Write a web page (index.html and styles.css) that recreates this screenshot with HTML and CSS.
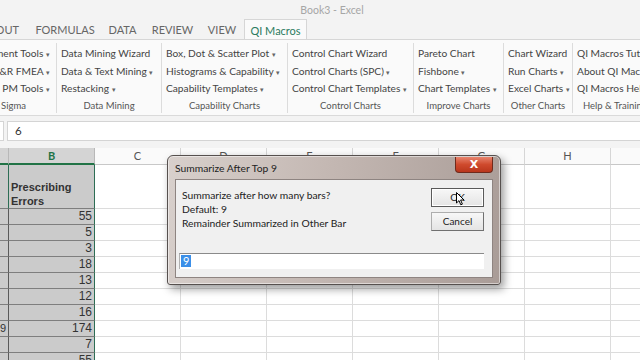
FILE: index.html
```html
<!DOCTYPE html>
<html lang="en">
<head>
  <meta charset="UTF-8" />
  <meta name="viewport" content="width=device-width, initial-scale=1.0"/>
  <title>Book3 - Excel</title>
  <link rel="stylesheet" href="styles.css">
</head>
<body>

  <div class="titlebar">Book3 - Excel</div>

  <div class="tabs">
    <div class="tab t-layout"><span>PAGE LAYOUT</span></div>
    <div class="tab t-formulas">FORMULAS</div>
    <div class="tab t-data">DATA</div>
    <div class="tab t-review">REVIEW</div>
    <div class="tab t-view">VIEW</div>
    <div class="tab t-qi on">QI Macros</div>
  </div>

  <!-- Ribbon groups -->
  <div class="ribbon">
    <div class="group g1">
      <div class="item"><span>Improvement Tools <i>▾</i></span></div>
      <div class="item"><span>Gage R&amp;R FMEA <i>▾</i></span></div>
      <div class="item"><span>Lean PM Tools <i>▾</i></span></div>
      <div class="glabel"><span>Lean Six Sigma</span></div>
    </div>
    <div class="group g2">
      <div class="item">Data Mining Wizard</div>
      <div class="item">Data &amp; Text Mining <i>▾</i></div>
      <div class="item">Restacking <i>▾</i></div>
      <div class="glabel">Data Mining</div>
    </div>
    <div class="group g3">
      <div class="item">Box, Dot &amp; Scatter Plot <i>▾</i></div>
      <div class="item">Histograms &amp; Capability <i>▾</i></div>
      <div class="item">Capability Templates <i>▾</i></div>
      <div class="glabel">Capability Charts</div>
    </div>
    <div class="group g4">
      <div class="item">Control Chart Wizard</div>
      <div class="item">Control Charts (SPC) <i>▾</i></div>
      <div class="item">Control Chart Templates <i>▾</i></div>
      <div class="glabel">Control Charts</div>
    </div>
    <div class="group g5">
      <div class="item">Pareto Chart</div>
      <div class="item">Fishbone <i>▾</i></div>
      <div class="item">Chart Templates <i>▾</i></div>
      <div class="glabel">Improve Charts</div>
    </div>
    <div class="group g6">
      <div class="item">Chart Wizard</div>
      <div class="item">Run Charts <i>▾</i></div>
      <div class="item">Excel Charts <i>▾</i></div>
      <div class="glabel">Other Charts</div>
    </div>
    <div class="group g7">
      <div class="item">QI Macros Tutorial</div>
      <div class="item">About QI Macros</div>
      <div class="item">QI Macros Help</div>
      <div class="glabel">Help &amp; Training</div>
    </div>
  </div>

  <div class="fbar">
    <div class="namebox"></div>
    <div class="formula">6</div>
  </div>

  <div class="sheet" id="sheet"></div>

  <!-- Summarize dialog -->
  <div class="dlg">
    <div class="dlg-title">
      <span>Summarize After Top 9</span>
      <div class="close">X</div>
    </div>
    <div class="dlg-body">
      <div class="dlg-top">
        <div class="msg">
          Summarize after how many bars?<br/>
          Default: 9<br/>
          Remainder Summarized in Other Bar
        </div>
        <div class="btns">
          <div class="btn focus">OK
            <svg class="cursor" width="9" height="14" viewBox="0 0 9 14">
              <path d="M0.5 0.5 L0.5 11 L3 8.6 L4.8 12.8 L6.4 12.1 L4.6 8 L8 8 Z" fill="#fff" stroke="#000" stroke-width="1"/>
            </svg>
          </div>
          <div class="btn">Cancel</div>
        </div>
      </div>
      <div class="dlg-input"><span class="hl">9</span></div>
    </div>
  </div>

  <script>
    const cols = ['A', 'B', 'C', 'D', 'E', 'F', 'G', 'H', 'I'];
    const values = ['55', '5', '3', '18', '13', '12', '16', '174', '7', '55'];
    const sheet = document.getElementById('sheet');

    function cell(cls, html) {
      const d = document.createElement('div');
      d.className = cls;
      d.innerHTML = html || '';
      sheet.appendChild(d);
    }

    // column headings
    cols.forEach((c) => {
      cell(c === 'A' || c === 'B' ? 'hd sel' : 'hd', c === 'A' ? '' : c);
    });

    // header row
    cell('c sel');
    cell('c sel title', 'Prescribing<br>Errors');
    for (let i = 2; i < cols.length; i++) cell('c');

    // data rows
    values.forEach((v, r) => {
      cell('c sel a', r === 7 ? '9' : '');
      cell('c sel num', v);
      for (let i = 2; i < cols.length; i++) cell('c');
    });
  </script>
</body>
</html>
```

FILE: styles.css
```css
* {
  box-sizing: border-box;
}
body {
  margin: 0;
  width: 640px;
  height: 360px;
  overflow: hidden;
  position: relative;
  background: #fff;
  font-family: Lato, "Noto Sans", sans-serif;
  color: #444;
}
i {
  font-style: normal;
  font-size: 7px;
  color: #666;
}

/* title + tabs */
.titlebar {
  height: 19px;
  background: #f3f3f3;
  color: #a6a6a6;
  font-size: 10.5px;
  line-height: 20px;
  text-align: center;
  padding-left: 24px;
}
.tabs {
  height: 21px;
  display: flex;
  background: #f3f3f3;
  border-bottom: 1px solid #d6d6d6;
  font-size: 11px;
  color: #666;
  overflow: hidden;
}
.tab {
  display: flex;
  align-items: center;
  justify-content: center;
  white-space: nowrap;
  flex-shrink: 0;
}
.t-layout {
  width: 30px;
  justify-content: flex-end;
  padding-right: 11px;
}
.t-formulas { width: 70px; }
.t-data { width: 45px; }
.t-review { width: 55px; }
.t-view { width: 44px; }
.t-qi { width: 63px; }
.tab.on {
  background: #fafafa;
  border: 1px solid #d6d6d6;
  border-bottom: none;
  height: 22px;
  color: #2b7a60;
}

/* ribbon */
.ribbon {
  height: 76px;
  display: flex;
  background: #fafafa;
  border-bottom: 1px solid #dadada;
  font-size: 10.2px;
  color: #444;
  overflow: hidden;
}
.group {
  display: flex;
  flex-direction: column;
  padding: 2px 0 0 4px;
  margin: 3px 0 2px;
  border-right: 1px solid #dcdcdc;
  white-space: nowrap;
  flex-shrink: 0;
}
.item {
  height: 17.5px;
  line-height: 17.5px;
}
.glabel {
  margin-top: auto;
  font-size: 9.5px;
  line-height: 14px;
  text-align: center;
  color: #555;
  padding-right: 4px;
}
.g1 { width: 57px; padding-left: 0; padding-right: 6px; }
.g1 .item, .g1 .glabel {
  display: flex;
  justify-content: flex-end;
}
.g1 .glabel { padding-right: 24px; }
.g2 { width: 105px; }
.g3 { width: 126px; }
.g4 { width: 126px; }
.g5 { width: 90px; }
.g6 { width: 69px; }
.g7 { width: 67px; border-right: none; overflow: hidden; }
.g7 .glabel { text-align: left; padding-left: 6px; }

/* formula bar */
.fbar {
  height: 32px;
  display: flex;
  gap: 3px;
  padding: 5px 0 7px;
  background: #f3f3f3;
}
.namebox {
  width: 4px;
  background: #fff;
  border: 1px solid #d4d4d4;
  border-left: none;
}
.formula {
  flex: 1;
  background: #fff;
  border: 1px solid #d4d4d4;
  border-right: none;
  font-size: 11.5px;
  line-height: 18px;
  padding-left: 7px;
  color: #333;
}

/* sheet grid */
.sheet {
  display: grid;
  grid-template-columns: 9px repeat(8, 86px);
  grid-template-rows: 17px 44px;
  grid-auto-rows: 16px;
  overflow: hidden;
  font-family: "Liberation Sans", Arial, sans-serif;
  font-size: 11px;
  color: #333;
}
.hd {
  background: #fafafa;
  border-right: 1px solid #d6d6d6;
  border-bottom: 1px solid #c8c8c8;
  text-align: center;
  line-height: 16px;
  font-family: Lato, sans-serif;
  font-size: 11px;
  color: #555;
}
.hd.sel {
  background: #d4d4d4;
  color: #217346;
  font-weight: bold;
  border-bottom: 2px solid #217346;
  border-right-color: #b8b8b8;
}
.c {
  border-right: 1px solid #dcdcdc;
  border-bottom: 1px solid #dcdcdc;
  overflow: hidden;
  white-space: nowrap;
}
.c.sel {
  background: #cbcbcb;
  border-right-color: #2d6e55;
  border-bottom-color: #7e7e7e;
}
.c.sel.a {
  border-right-color: #5a5a5a;
  text-align: right;
  line-height: 15px;
  padding-right: 7px;
  overflow: visible;
}
.title {
  font-weight: bold;
  line-height: 14px;
  padding: 15px 0 0 2px;
}
.num {
  text-align: right;
  line-height: 15px;
  padding-right: 2px;
  font-size: 12px;
}

/* dialog */
.dlg {
  position: absolute;
  left: 167px;
  top: 155px;
  width: 334px;
  height: 130px;
  border: 1px solid #56504e;
  border-radius: 6px 6px 3px 3px;
  background: linear-gradient(100deg, #d8d0cc 0%, #c4b8b3 45%, #a99c97 100%);
  box-shadow: 3px 4px 8px rgba(0, 0, 0, 0.4), inset 0 0 0 1px rgba(255, 255, 255, 0.5);
  padding: 0 7px 6px;
  display: flex;
  flex-direction: column;
}
.dlg-title {
  height: 23px;
  display: flex;
  align-items: center;
  font-size: 10.3px;
  color: #222;
}
.close {
  margin-left: auto;
  align-self: flex-start;
  width: 38px;
  height: 16px;
  margin-top: 1px;
  background: linear-gradient(#e7846d, #cf4a2d 50%, #b9361c);
  border: 1px solid #6f2a1c;
  border-top: none;
  border-radius: 0 0 4px 4px;
  color: #fff;
  font-family: "DejaVu Sans", sans-serif;
  font-weight: bold;
  font-size: 11px;
  text-align: center;
  line-height: 15px;
}
.dlg-body {
  flex: 1;
  background: #f0f0f0;
  border: 1px solid #8e8481;
  display: flex;
  flex-direction: column;
}
.dlg-top {
  display: flex;
}
.msg {
  flex: 1;
  padding: 8px 0 0 6px;
  font-size: 10.3px;
  line-height: 14px;
  color: #222;
}
.btns {
  width: 53px;
  margin-right: 8px;
  padding-top: 8px;
  display: flex;
  flex-direction: column;
  gap: 5px;
}
.btn {
  position: relative;
  height: 19px;
  background: linear-gradient(#f7f7f7, #e4e4e4);
  border: 1px solid #adadad;
  border-right-color: #707070;
  border-bottom-color: #707070;
  font-size: 10px;
  text-align: center;
  line-height: 17px;
  color: #222;
}
.btn.focus {
  border: 1px solid #5a5a5a;
  box-shadow: inset 0 0 0 1px #fff;
}
.cursor {
  position: absolute;
  left: 24px;
  top: 3px;
}
.dlg-input {
  margin: auto 8px 8px 3px;
  height: 16px;
  background: #fff;
  border-top: 1px solid #8a8a8a;
  border-left: 1px solid #b0b0b0;
  padding: 1px 0 0 1px;
  font-size: 11px;
  line-height: 12px;
}
.hl {
  display: inline-block;
  background: #3b8fe8;
  color: #fff;
  padding: 0 2px;
}
```
